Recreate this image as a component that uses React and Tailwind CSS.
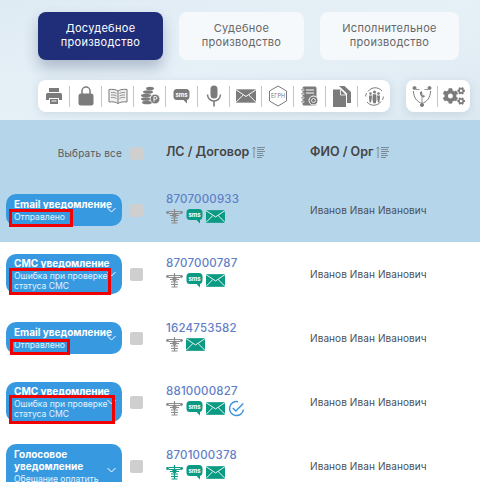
import React from 'react';
import { FaCogs } from 'react-icons/fa';

const GRAY = '#7b7b7b';

const tabs = [
  { label: 'Досудебное производство', width: 'w-[125px]', active: true },
  { label: 'Судебное производство', width: 'w-[125px]' },
  { label: 'Исполнительное производство', width: 'w-[139px]' },
];

const PrintIcon = () => (
  <svg width="18" height="18" viewBox="0 0 18 18" fill={GRAY}>
    <path d="M4 1h10v4H4z" />
    <path d="M2.500 6h13A1.500 1.500 0 0 1 17 7.500V13h-3v-2H4v2H1V7.500A1.500 1.500 0 0 1 2.500 6z" />
    <path d="M5 12h8v5H5z" />
    <path d="M6.500 13.500h5v1h-5z" fill="#fff" />
  </svg>
);

const LockIcon = () => (
  <svg width="16" height="20" viewBox="0 0 16 20" fill={GRAY}>
    <path d="M4 9V5a4 4 0 0 1 8 0v4" fill="none" stroke={GRAY} strokeWidth="1.500" />
    <rect x="0.500" y="7.500" width="15" height="12" rx="2.500" />
  </svg>
);

const BookIcon = () => (
  <svg width="20" height="17" viewBox="0 0 20 17" fill="none" stroke={GRAY} strokeWidth="1">
    <path d="M10 3C8 1.500 4.500 1 1 1.500v12.500c3.500-.5 7 0 9 1.500 2-1.500 5.500-2 9-1.500V1.500C15.500 1 12 1.500 10 3zM10 3v12.500" fill="#efefef" />
    <path d="M3 4.500c2-.2 4 0 5.500 1M3 7c2-.2 4 0 5.500 1M3 9.500c2-.2 4 0 5.500 1M11.500 5.500c1.500-1 3.500-1.200 5.500-1M11.500 8c1.500-1 3.500-1.200 5.500-1M11.500 10.500c1.500-1 3.500-1.200 5.500-1" strokeWidth="0.800" />
  </svg>
);

const CoinsIcon = () => (
  <svg width="20" height="20" viewBox="0 0 20 20" fill={GRAY}>
    <ellipse cx="10" cy="2.500" rx="4" ry="1.800" />
    <ellipse cx="8" cy="6" rx="5" ry="1.800" />
    <ellipse cx="6" cy="9.500" rx="5" ry="1.800" />
    <ellipse cx="6" cy="13" rx="5" ry="1.800" />
    <ellipse cx="7" cy="16.500" rx="5" ry="1.800" />
    <circle cx="15" cy="13" r="4.800" stroke="#fff" strokeWidth="0.600" />
    <path d="M14 15.800V10.500h1.500a1.400 1.400 0 0 1 0 2.800H14" fill="none" stroke="#fff" strokeWidth="0.900" />
  </svg>
);

const SmsIcon = ({ color = GRAY, w = 17, h = 16 }) => (
  <svg width={w} height={h} viewBox="0 0 17 16">
    <path d="M4 1h9a3.500 3.500 0 0 1 3.500 3.500v4A3.500 3.500 0 0 1 14 12v3.500L10.500 12H4A3.500 3.500 0 0 1 .5 8.500v-4A3.500 3.500 0 0 1 4 1z" fill={color} />
    <text x="8.500" y="8.800" textAnchor="middle" fontSize="6" fontWeight="700" fill="#fff" fontFamily="Inter, sans-serif">sms</text>
  </svg>
);

const MicIcon = () => (
  <svg width="16" height="22" viewBox="0 0 16 22" fill={GRAY}>
    <rect x="4.500" y="0.500" width="7" height="13" rx="3.500" />
    <path d="M1.500 9.500a6.500 6.500 0 0 0 13 0" fill="none" stroke={GRAY} strokeWidth="1.500" />
    <path d="M7.200 16h1.600v5.500H7.200z" />
  </svg>
);

const MailIcon = ({ color = GRAY, w = 21, h = 14 }) => (
  <svg width={w} height={h} viewBox="0 0 21 14">
    <rect width="21" height="14" fill={color} />
    <path d="M0 0.500l10.500 7 10.500-7M0 13.500l7.500-7.500M21 13.500l-7.500-7.500" fill="none" stroke="#fff" strokeWidth="1" />
  </svg>
);

const EgrnIcon = () => (
  <svg width="20" height="22" viewBox="0 0 20 22">
    <path d="M10 1l8.500 5v10L10 21l-8.500-5V6z" fill="none" stroke={GRAY} strokeWidth="1" />
    <text x="10" y="13" textAnchor="middle" fontSize="5.500" fill={GRAY} fontFamily="Inter, sans-serif">ЕГРН</text>
  </svg>
);

const NotebookIcon = () => (
  <svg width="18" height="20" viewBox="0 0 18 20" fill={GRAY}>
    <rect x="1.500" y="0.500" width="14" height="19" rx="1.500" />
    <path d="M0 3h3v1.500H0zM0 7h3v1.500H0zM0 11h3v1.500H0zM0 15h3v1.500H0z" stroke="#fff" strokeWidth="0.500" />
    <path d="M5 4h8M5 7h8" stroke="#fff" strokeWidth="1" />
    <circle cx="12.500" cy="14.500" r="4.500" stroke="#fff" />
    <path d="M10.500 14.500a2 2 0 0 1 4 0M14.500 14.500a2 2 0 0 1-4 0" fill="none" stroke="#fff" strokeWidth="0.800" />
  </svg>
);

const FilesIcon = () => (
  <svg width="18" height="21" viewBox="0 0 18 21" fill={GRAY}>
    <path d="M6 0h5.500L18 6v11h-4V7.500L6 0z" />
    <path d="M0 3.500h7.500L13 9v12H0z" />
    <path d="M7.500 3.500V9H13" fill="none" stroke="#fff" strokeWidth="0.800" />
  </svg>
);

const PeopleIcon = () => (
  <svg width="21" height="21" viewBox="0 0 21 21" fill={GRAY}>
    <path d="M4 5.500A8.800 8.800 0 0 1 18 5M17 15.500A8.800 8.800 0 0 1 3 16M1.700 10.500a8.800 8.800 0 0 1 .8-3.500M19.300 10.500a8.800 8.800 0 0 1-.8 3.500" fill="none" stroke={GRAY} strokeWidth="1" />
    <circle cx="10.500" cy="6" r="1.500" />
    <circle cx="6.500" cy="7.500" r="1.300" />
    <circle cx="14.500" cy="7.500" r="1.300" />
    <path d="M8.800 8.200h3.400l.3 5-.7 4H9.200l-.7-4zM5 9.500h3l-.4 4-.6 3H5.700l-.5-3zM13 9.500h3l-.2 4-.5 3H14l-.6-3z" />
  </svg>
);

const TreeIcon = () => (
  <svg width="22" height="22" viewBox="0 0 22 22" fill="none" stroke={GRAY} strokeWidth="1">
    <path d="M2.500 6c0 7 4 11 8.500 12.500C15.500 17 19.500 13 19.500 6" />
    <path d="M5 4.500h3.500M13.500 4.500H17M11 18.500V8" strokeWidth="0.800" />
    <circle cx="3.500" cy="3" r="1.500" fill={GRAY} />
    <circle cx="18.500" cy="3" r="1.500" fill={GRAY} />
    <circle cx="11" cy="20" r="1.500" fill={GRAY} />
    <path d="M9 7c-.5 3 1.500 5 4 5.500l1-1.500-1.800-1-.7.700c-.6-.5-1-1.200-1-2l.8-.5-.6-2z" fill={GRAY} stroke="none" />
  </svg>
);

const AntennaIcon = ({ color = '#8c8c8c' }) => (
  <svg width="17" height="15" viewBox="0 0 17 15" fill="none" stroke={color} strokeWidth="1.200">
    <path d="M8.500 0v14M5.500 14h6M5 11.500h7M5 9h7M4 6.500h9M2.500 2.500h12M2.500 4.500h12" />
    <circle cx="1.500" cy="3.500" r="1.400" fill={color} stroke="none" />
    <circle cx="15.500" cy="3.500" r="1.400" fill={color} stroke="none" />
    <circle cx="8.500" cy="6" r="2.200" fill={color} stroke="none" />
  </svg>
);

const CheckIcon = () => (
  <svg width="17" height="17" viewBox="0 0 17 17" fill="none" stroke="#3f95dd" strokeWidth="1.500">
    <path d="M15.500 9.500A7 7 0 1 1 10 1.700" />
    <path d="M4.800 8l3 3 7.500-7.500" />
  </svg>
);

const SortIcon = () => (
  <svg width="13" height="13" viewBox="0 0 13 13" fill="none" stroke="#7a8a96" strokeWidth="1">
    <path d="M2 1v11M.5 2.500L2 1l1.500 1.500" />
    <path d="M5 1.500h8M5 3.500h7M5 5.500h8M5 7.500h6M5 9.500h7M5 11.500h5" />
  </svg>
);

const Chevron = () => (
  <svg width="9" height="6" viewBox="0 0 9 6" fill="none" stroke="#fff" strokeWidth="1">
    <path d="M.5 1l4 4 4-4" />
  </svg>
);

const Checkbox = () => <div className="h-[13px] w-[13px] shrink-0 rounded-[2px] bg-[#cfcfcf]" />;

const rows = [
  {
    title: 'Email уведомление',
    status: 'Отправлено',
    account: '8707000933',
    pill: 'h-[32px] pt-[4px]',
    mark: 'left-[3px] top-[15px] h-[18px] w-[64px]',
    shade: true,
    icons: ['antenna', 'sms', 'mail'],
  },
  {
    title: 'СМС уведомление',
    status: 'Ошибка при проверке статуса СМС',
    account: '8707000787',
    pill: 'h-[40px] pt-[3px]',
    mark: 'left-[3px] top-[14px] h-[27px] w-[102px]',
    icons: ['antenna', 'sms', 'mail'],
  },
  {
    title: 'Email уведомление',
    status: 'Отправлено',
    account: '1624753582',
    pill: 'h-[32px] pt-[4px]',
    mark: 'left-[4px] top-[17px] h-[16px] w-[60px]',
    icons: ['antenna', 'mail'],
  },
  {
    title: 'СМС уведомление',
    status: 'Ошибка при проверке статуса СМС',
    account: '8810000827',
    pill: 'h-[40px] pt-[3px]',
    mark: 'left-[3px] top-[13px] h-[29px] w-[106px]',
    icons: ['antenna', 'sms', 'mail', 'check'],
  },
  {
    title: 'Голосовое уведомление',
    status: 'Обещание оплатить',
    account: '8701000378',
    pill: 'h-[52px] pt-[4px] self-start mt-[10px]',
    icons: ['antennaGreen', 'sms', 'mail'],
  },
];

const rowIcons = {
  antenna: <AntennaIcon />,
  antennaGreen: <AntennaIcon color="#0b9a84" />,
  sms: <SmsIcon color="#0b9a84" />,
  mail: <MailIcon color="#0b9a84" w={19} h={13} />,
  check: <CheckIcon />,
};

const Row = ({ row }) => (
  <div className={`flex h-[64px] items-center pl-[6px] ${row.shade ? 'bg-[#b5d5ea]' : 'bg-white'}`}>
    <div className={`relative w-[116px] shrink-0 rounded-[10px] bg-[#379ae0] pl-[8px] pr-[4px] text-white ${row.pill}`}>
      <div className="w-[100px] text-[10px] font-bold leading-[12px]">{row.title}</div>
      <div className="mt-[2px] w-[98px] text-[8.600px] leading-[10px] text-[#e4f2fc]">{row.status}</div>
      <div className="absolute right-[6px] top-1/2 -translate-y-1/2">
        <Chevron />
      </div>
      {row.mark && <div className={`absolute border-[3px] border-[#f00000] ${row.mark}`} />}
    </div>
    <div className="ml-[8px]">
      <Checkbox />
    </div>
    <div className="ml-[23px] w-[144px] shrink-0 pb-[4px]">
      <div className="text-[11.500px] font-medium leading-[15px] tracking-[0.2px] text-[#5f80c8]">{row.account}</div>
      <div className="mt-[1px] flex items-center gap-[3px]">
        {row.icons.map((name) => (
          <React.Fragment key={name}>{rowIcons[name]}</React.Fragment>
        ))}
      </div>
    </div>
    <div className="text-[10px] tracking-[0.1px] text-[#4a4f55]">Иванов Иван Иванович</div>
  </div>
);

const Toolbar = ({ items }) => (
  <div className="flex h-[32px] items-center rounded-[8px] bg-white shadow-[0_2px_8px_rgba(90,120,150,0.18)]">
    {items.map((icon, i) => (
      <div key={i} className={`flex h-[21px] w-[32px] items-center justify-center ${i < items.length - 1 ? 'border-r border-[#c4c4c4]' : ''}`}>
        {icon}
      </div>
    ))}
  </div>
);

export default function App() {
  return (
    <div className="h-[482px] w-[480px] overflow-hidden bg-white font-['Inter',sans-serif]">
      <div className="h-[120px] bg-gradient-to-br from-[#dfebf3] via-[#e6f0f7] to-[#dde9f1] pl-[38px]">
        <div className="flex gap-[16px] pt-[12px]">
          {tabs.map((tab) => (
            <div
              key={tab.label}
              className={`flex h-[48px] items-center justify-center rounded-[8px] pb-[2px] text-center text-[11px] leading-[14px] tracking-[0.3px] ${tab.width} ${
                tab.active
                  ? 'bg-[#202e7a] text-white shadow-[0_8px_14px_rgba(50,70,110,0.3)]'
                  : 'bg-[#f5f9fc] text-[#666666]'
              }`}
            >
              {tab.label}
            </div>
          ))}
        </div>
        <div className="mt-[20px] flex gap-[16px]">
          <Toolbar
            items={[
              <PrintIcon />,
              <LockIcon />,
              <BookIcon />,
              <CoinsIcon />,
              <SmsIcon />,
              <MicIcon />,
              <MailIcon w={20} h={14} />,
              <EgrnIcon />,
              <NotebookIcon />,
              <FilesIcon />,
              <PeopleIcon />,
            ]}
          />
          <Toolbar items={[<TreeIcon />, <FaCogs size={22} color={GRAY} />]} />
        </div>
      </div>

      <div className="flex h-[58px] items-end bg-[#b5d5ea] pb-[18px]">
        <div className="w-[122px] text-right text-[10px] leading-[14px] tracking-[0.2px] text-[#5a5a5a]">Выбрать все</div>
        <div className="ml-[8px]">
          <Checkbox />
        </div>
        <div className="ml-[23px] flex w-[144px] items-center gap-[3px]">
          <span className="text-[12.500px] font-semibold leading-[16px] text-[#454545]">ЛС / Договор</span>
          <SortIcon />
        </div>
        <div className="flex items-center gap-[2px]">
          <span className="text-[12.500px] font-semibold leading-[16px] text-[#454545]">ФИО / Орг</span>
          <SortIcon />
        </div>
      </div>

      {rows.map((row) => (
        <Row key={row.account} row={row} />
      ))}
    </div>
  );
}
